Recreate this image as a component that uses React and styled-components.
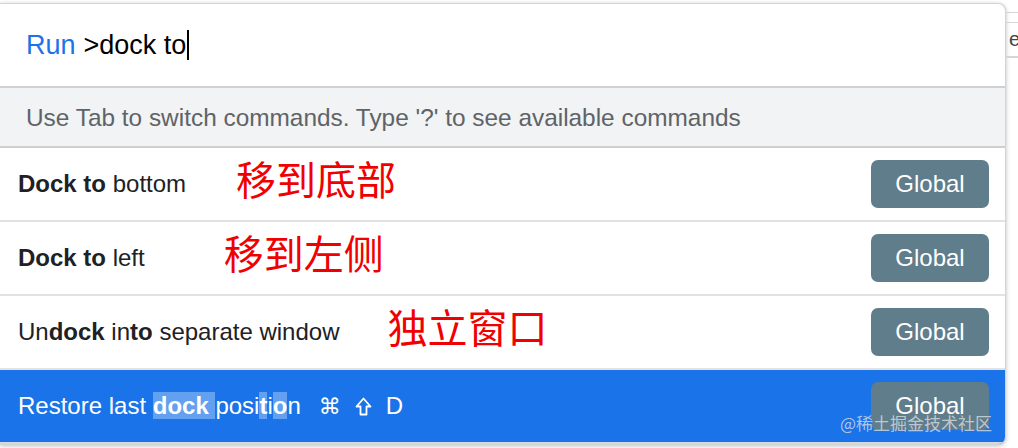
import React from 'react'
import styled, { createGlobalStyle } from 'styled-components'

const GlobalStyle = createGlobalStyle`
  html, body {
    margin: 0;
    padding: 0;
    background: #fff;
    font-family: "Liberation Sans", Arial, "Noto Sans CJK SC", sans-serif;
  }
`

const Page = styled.div`
  display: flex;
  align-items: flex-start;
  width: 1018px;
  height: 448px;
  overflow: hidden;
  position: relative;
`

const Panel = styled.div`
  flex-shrink: 0;
  width: 1005px;
  margin-top: 3px;
  background: #fff;
  border: 1px solid #d4d4d4;
  border-left: none;
  border-radius: 0 8px 8px 0;
  box-shadow: 0 1px 4px rgba(0, 0, 0, 0.25);
  overflow: hidden;
`

const InputBar = styled.div`
  height: 82px;
  display: flex;
  align-items: center;
  padding-left: 26px;
  font-size: 27px;
  color: #000;
  border-bottom: 2px solid #d0d0d0;
`

const Prompt = styled.span`
  color: #1a73e8;
  margin-right: 8px;
`

const Caret = styled.span`
  display: inline-block;
  width: 2px;
  height: 30px;
  background: #000;
  margin-left: 1px;
`

const Hint = styled.div`
  height: 56px;
  display: flex;
  align-items: center;
  padding: 2px 0 0 26px;
  background: #f1f3f4;
  color: #5f6368;
  font-size: 24.4px;
  border-bottom: 2px solid #cfcfcf;
`

const Row = styled.div`
  height: 72px;
  display: flex;
  align-items: center;
  padding: 0 16px 0 18px;
  font-size: 24px;
  color: ${p => (p.selected ? '#fff' : '#202124')};
  background: ${p => (p.selected ? '#1a73e8' : '#fff')};
  border-bottom: 2px solid ${p => (p.selected ? '#d8d8d8' : '#e2e2e2')};
`

const Title = styled.span`
  white-space: pre;
`

const Match = styled.b`
  font-weight: 700;
  background: ${p => (p.mark ? 'rgba(255, 255, 255, 0.32)' : 'transparent')};
`

const Note = styled.span`
  margin-left: ${p => p.offset}px;
  margin-top: -12px;
  color: #f00000;
  font-size: 40px;
  font-family: "Noto Sans CJK SC", sans-serif;
`

const Keys = styled.span`
  display: flex;
  align-items: center;
  gap: 14px;
  margin-left: 18px;
  font-size: 24px;
`

const Cmd = styled.span`
  font-family: "DejaVu Sans", sans-serif;
  font-size: 22px;
`

const Spacer = styled.div`
  flex: 1;
`

const Tag = styled.span`
  width: 118px;
  height: 48px;
  display: flex;
  align-items: center;
  justify-content: center;
  border-radius: 7px;
  background: #607d8b;
  color: #fff;
  font-size: 24px;
`

const Behind = styled.div`
  flex: 1;
  height: 100px;
  display: flex;
  flex-direction: column;
  padding-top: 12px;
  overflow: hidden;
`

const Rule = styled.div`
  height: 1px;
  background: #d6d6d6;
  margin-bottom: ${p => p.gap}px;
`

const Peek = styled.div`
  height: 33px;
  display: flex;
  align-items: center;
  padding-left: 3px;
  color: #444;
  font-size: 20px;
  border-top: 1px solid #d6d6d6;
  border-bottom: 1px solid #d6d6d6;
`

const Watermark = styled.div`
  position: absolute;
  left: 840px;
  top: 410px;
  font-size: 17px;
  color: rgba(215, 220, 226, 0.8);
  font-family: "Noto Sans CJK SC", sans-serif;
  pointer-events: none;
`

const ShiftIcon = () => (
  <svg width="17" height="19" viewBox="0 0 17 19">
    <path
      d="M8.5 1.5 L15.5 9.5 H11.5 V17.5 H5.5 V9.5 H1.5 Z"
      fill="none"
      stroke="#fff"
      strokeWidth="1.8"
      strokeLinejoin="round"
    />
  </svg>
)

const commands = [
  {
    title: (
      <>
        <Match>Dock to</Match> bottom
      </>
    ),
    note: '移到底部',
    offset: 50
  },
  {
    title: (
      <>
        <Match>Dock to</Match> left
      </>
    ),
    note: '移到左侧',
    offset: 79
  },
  {
    title: (
      <>
        Un<Match>dock</Match> in<Match>to</Match> separate window
      </>
    ),
    note: '独立窗口',
    offset: 48
  }
]

const App = () => {
  return (
    <>
      <GlobalStyle />
      <Page>
        <Panel>
          <InputBar>
            <Prompt>Run</Prompt>
            <span>&gt;dock to</span>
            <Caret />
          </InputBar>
          <Hint>Use Tab to switch commands. Type '?' to see available commands</Hint>
          {commands.map((c, i) => (
            <Row key={i}>
              <Title>{c.title}</Title>
              <Note offset={c.offset}>{c.note}</Note>
              <Spacer />
              <Tag>Global</Tag>
            </Row>
          ))}
          <Row selected>
            <Title>
              Restore last <Match mark>dock </Match>posi<Match mark>t</Match>i<Match mark>o</Match>n
            </Title>
            <Keys>
              <Cmd>⌘</Cmd>
              <ShiftIcon />
              <span>D</span>
            </Keys>
            <Spacer />
            <Tag>Global</Tag>
          </Row>
        </Panel>
        <Behind>
          <Rule gap={9} />
          <Peek>e</Peek>
          <Rule gap={0} />
        </Behind>
        <Watermark>@稀土掘金技术社区</Watermark>
      </Page>
    </>
  )
}

export default App
